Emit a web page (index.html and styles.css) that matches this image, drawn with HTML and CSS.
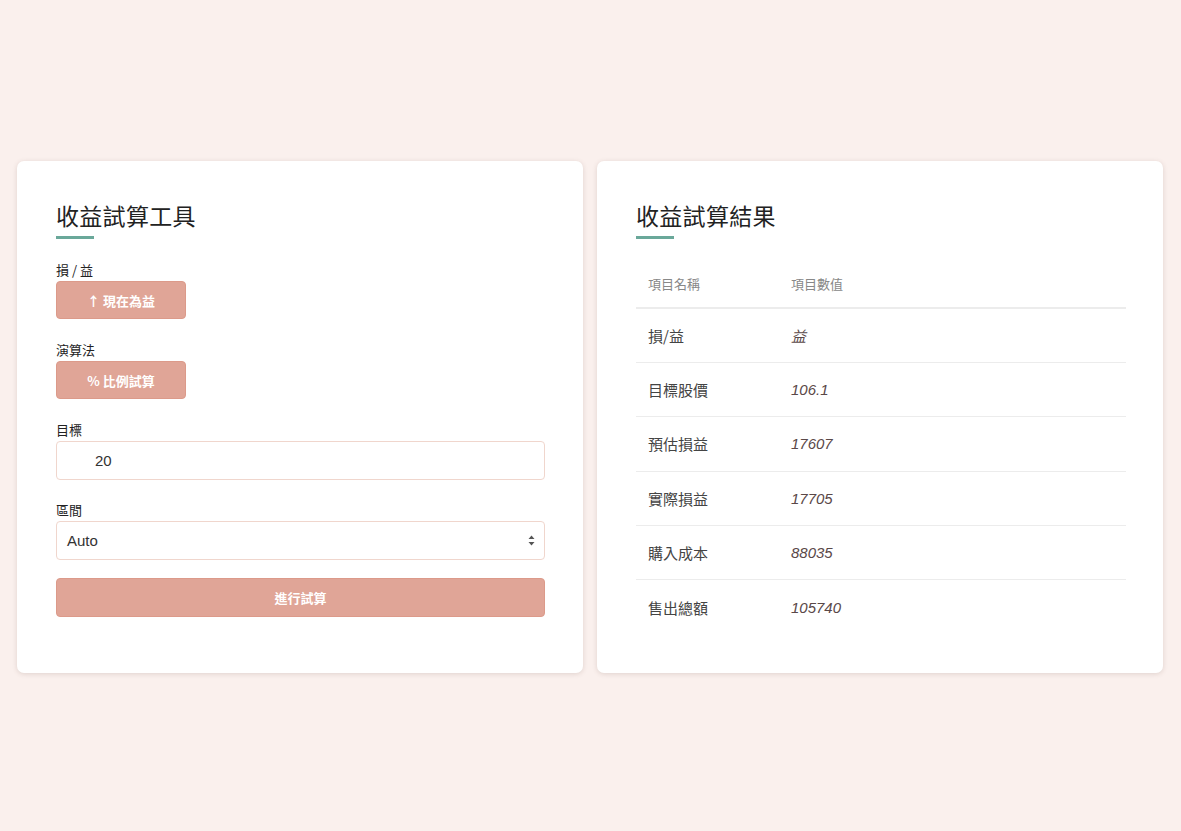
FILE: index.html
```html
<!DOCTYPE html>
<html lang="zh-Hant">
<head>
<meta charset="utf-8">
<link rel="stylesheet" href="styles.css">
</head>
<body>
<main class="wrap">
  <section class="card">
    <h2 class="title">收益試算工具</h2>
    <div class="bar"></div>
    <div class="field">
      <label class="label">損 / 益</label>
      <button class="btn small">↑ 現在為益</button>
    </div>
    <div class="field">
      <label class="label">演算法</label>
      <button class="btn small">% 比例試算</button>
    </div>
    <div class="field">
      <label class="label">目標</label>
      <input class="input target" type="text" value="20">
    </div>
    <div class="field last">
      <label class="label">區間</label>
      <div class="select">
        <span>Auto</span>
        <svg class="arrows" width="7" height="11" viewBox="0 0 7 11"><path d="M3.5 0.5 L6.5 4 H0.5 Z M0.5 7 H6.5 L3.5 10.5 Z" fill="#555"/></svg>
      </div>
    </div>
    <button class="btn wide">進行試算</button>
  </section>
  <section class="card">
    <h2 class="title">收益試算結果</h2>
    <div class="bar"></div>
    <table class="table">
      <thead>
        <tr><th>項目名稱</th><th>項目數值</th></tr>
      </thead>
      <tbody>
        <tr><td>損/益</td><td class="val">益</td></tr>
        <tr><td>目標股價</td><td class="val">106.1</td></tr>
        <tr><td>預估損益</td><td class="val">17607</td></tr>
        <tr><td>實際損益</td><td class="val">17705</td></tr>
        <tr><td>購入成本</td><td class="val">88035</td></tr>
        <tr><td>售出總額</td><td class="val">105740</td></tr>
      </tbody>
    </table>
  </section>
</main>
</body>
</html>
```
FILE: styles.css
```css
* { box-sizing: border-box; }
html, body { margin: 0; padding: 0; }
body {
  background: #faf0ed;
  font-family: "Noto Sans CJK TC", "Noto Sans", sans-serif;
  color: #333;
  width: 1181px;
  height: 831px;
  overflow: hidden;
}
.wrap {
  display: grid;
  grid-template-columns: 566px 566px;
  gap: 14px;
  padding: 161px 0 0 17px;
}
.card {
  background: #fff;
  border-radius: 7px;
  box-shadow: 0 1px 5px rgba(120, 90, 80, 0.2);
  height: 512px;
  padding: 38px 39px 0 39px;
}
.title {
  margin: 0;
  font-size: 23px;
  font-weight: 400;
  line-height: 32px;
  color: #222;
  letter-spacing: 0.3px;
}
.bar {
  width: 38px;
  height: 3px;
  background: #6aa89a;
  margin-top: 5px;
  margin-bottom: 22px;
}
.field { margin-bottom: 22px; }
.field.last { margin-top: -1px; }
.label {
  display: block;
  font-size: 13px;
  font-weight: 400;
  line-height: 18px;
  color: #222;
  margin-bottom: 2px;
}
.btn {
  background: #e0a597;
  border: 1px solid #dc9a8a;
  color: #fff;
  font-family: inherit;
  font-weight: 700;
  font-size: 13px;
  border-radius: 4px;
  height: 38px;
  padding: 0;
  cursor: pointer;
}
.small { width: 130px; }
.wide { width: 489px; display: block; margin-top: -4px; height: 39px; }
.input, .select {
  width: 489px;
  height: 39px;
  border: 1px solid #f0d6cd;
  border-radius: 4px;
  background: #fff;
  font-family: "Liberation Sans", "Noto Sans", sans-serif;
  font-size: 15px;
  color: #333;
}
.input.target { padding-left: 38px; outline: none; display: block; }
.select {
  display: flex;
  align-items: center;
  justify-content: space-between;
  padding: 0 9px 0 10px;
}
.table {
  width: 490px;
  border-collapse: collapse;
  margin-top: -2px;
}
.table th {
  text-align: left;
  font-size: 13px;
  font-weight: 400;
  color: #888;
  height: 49px;
  padding: 0 12px;
  border-bottom: 2px solid #ececec;
}
.table th:first-child, .table td:first-child { width: 143px; }
.table td {
  font-size: 15px;
  color: #444;
  height: 54.4px;
  padding: 0 12px;
  border-bottom: 1px solid #ececec;
}
.table tr:last-child td { border-bottom: none; }
.table td.val {
  font-family: "Liberation Sans", "Noto Sans CJK TC", sans-serif;
  font-style: italic;
  color: #5a4848;
}
```
